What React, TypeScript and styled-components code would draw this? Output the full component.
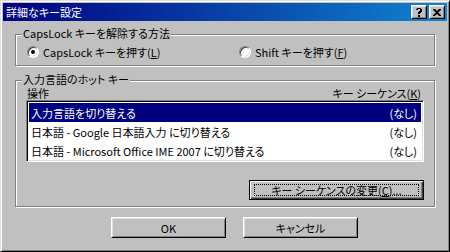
import React from "react";
import styled, { createGlobalStyle, css } from "styled-components";

const Global = createGlobalStyle`
  html, body { margin: 0; padding: 0; background: #c0c0c0; }
  body {
    font-family: "Noto Sans CJK JP", "Liberation Sans", sans-serif;
    font-size: 11px;
    font-feature-settings: "palt";
    color: #000;
  }
  * { box-sizing: border-box; }
`;

const raised = css`
  border: 1px solid;
  border-color: #fff #000 #000 #fff;
  box-shadow: inset 1px 1px #dfdfdf, inset -1px -1px #808080;
`;

const Window = styled.div`
  width: 450px;
  height: 252px;
  background: #c0c0c0;
  border: 1px solid;
  border-color: #dfdfdf #000 #000 #dfdfdf;
  box-shadow: inset 1px 1px #fff, inset -1px -1px #808080;
  padding: 2px;
  display: flex;
  flex-direction: column;
`;

const TitleBar = styled.div`
  height: 18px;
  flex: none;
  display: flex;
  align-items: center;
  padding: 0 2px 0 3px;
  background: linear-gradient(to right, #000080, #1084d0);
  color: #fff;
  font-size: 11px;
`;

const TitleText = styled.span`
  line-height: 18px;
`;

const CaptionButtons = styled.div`
  margin-left: auto;
  display: flex;
  gap: 2px;
`;

const CaptionButton = styled.div`
  width: 16px;
  height: 14px;
  background: #c0c0c0;
  ${raised};
  display: flex;
  align-items: center;
  justify-content: center;
`;

const Body = styled.div`
  flex: 1;
  display: flex;
  flex-direction: column;
  padding: 0 12px;
`;

const Group = styled.div<{ $top: number }>`
  position: relative;
  margin-top: ${(p) => p.$top}px;
  border: 1px solid #808080;
  box-shadow: inset 1px 1px #fff, 1px 1px #fff;
`;

const Legend = styled.span`
  position: absolute;
  top: -8px;
  left: 6px;
  padding: 0 1px;
  line-height: 12px;
  background: #c0c0c0;
  white-space: nowrap;
`;

const RadioRow = styled.div`
  display: flex;
  align-items: center;
  height: 14px;
  margin: 10px 0 6px;
  padding-left: 11px;
`;

const RadioItem = styled.label<{ $width?: number }>`
  display: flex;
  align-items: center;
  gap: 4px;
  width: ${(p) => (p.$width ? `${p.$width}px` : "auto")};
  white-space: nowrap;
`;

const RadioCircle = styled.span<{ $checked?: boolean }>`
  width: 12px;
  height: 12px;
  flex: none;
  position: relative;
  border-radius: 50%;
  background: #fff;
  border: 1px solid;
  border-color: #808080 #fff #fff #808080;
  box-shadow: inset 1px 1px #404040, inset -1px -1px #dfdfdf;
  &::after {
    content: "";
    display: ${(p) => (p.$checked ? "block" : "none")};
    position: absolute;
    left: 3px;
    top: 3px;
    width: 4px;
    height: 4px;
    border-radius: 50%;
    background: #000;
  }
`;

const U = styled.span`
  text-decoration: underline;
  text-underline-offset: 1px;
`;

const GroupInner = styled.div`
  display: flex;
  flex-direction: column;
  padding: 6px 10px 6px 10px;
`;

const HeaderRow = styled.div`
  display: flex;
  justify-content: space-between;
  height: 13px;
  line-height: 12px;
  padding: 0 3px 0 1px;
`;

const ListBox = styled.div`
  background: #fff;
  border: 1px solid;
  border-color: #808080 #fff #fff #808080;
  box-shadow: inset 1px 1px #000, inset -1px -1px #dfdfdf;
  padding: 2px 2px 1px 2px;
  display: flex;
  flex-direction: column;
`;

const ListRow = styled.div<{ $selected?: boolean }>`
  height: 19px;
  display: flex;
  align-items: center;
  justify-content: space-between;
  padding: 0 4px 0 2px;
  white-space: nowrap;
  background: ${(p) => (p.$selected ? "#000080" : "transparent")};
  color: ${(p) => (p.$selected ? "#fff" : "#000")};
`;

const ActionRow = styled.div`
  display: flex;
  justify-content: flex-end;
  margin-top: 18px;
`;

const PushButton = styled.button<{ $width: number; $default?: boolean; $height?: number }>`
  width: ${(p) => p.$width}px;
  height: ${(p) => p.$height ?? 21}px;
  font: inherit;
  color: #000;
  background: #c0c0c0;
  padding: 0;
  position: relative;
  ${(p) =>
    p.$default
      ? css`
          border: 1px solid #000;
          box-shadow: inset 1px 1px #fff, inset -1px -1px #404040,
            inset -2px -2px #808080;
        `
      : raised};
  display: flex;
  align-items: center;
  justify-content: center;
`;

const FocusRing = styled.span`
  position: absolute;
  inset: 3px 4px;
  border: 1px dotted #000;
`;

const Footer = styled.div`
  display: flex;
  gap: 17px;
  margin-top: 10px;
  padding-left: 96px;
`;

const Glyph = styled.svg`
  display: block;
`;

export default function App() {
  return (
    <>
      <Global />
      <Window>
        <TitleBar>
          <TitleText>詳細なキー設定</TitleText>
          <CaptionButtons>
            <CaptionButton>
              <Glyph width="8" height="9" viewBox="0 0 8 9">
                <path
                  d="M1 1h1V0h4v1h1v3H6v1H5v1H3V4h1V3h1V1H3v1H1z M3 7h2v2H3z"
                  fill="#000"
                />
              </Glyph>
            </CaptionButton>
            <CaptionButton>
              <Glyph width="8" height="7" viewBox="0 0 8 7">
                <path
                  d="M0 0h2l2 2 2-2h2v1L5 3.5 8 6v1H6L4 5 2 7H0V6l3-2.5L0 1z"
                  fill="#000"
                />
              </Glyph>
            </CaptionButton>
          </CaptionButtons>
        </TitleBar>
        <Body>
          <Group $top={13}>
            <Legend>CapsLock キーを解除する方法</Legend>
            <RadioRow>
              <RadioItem $width={212}>
                <RadioCircle $checked />
                <span>
                  CapsLock キーを押す(<U>L</U>)
                </span>
              </RadioItem>
              <RadioItem>
                <RadioCircle />
                <span>
                  Shift キーを押す(<U>F</U>)
                </span>
              </RadioItem>
            </RadioRow>
          </Group>
          <Group $top={14}>
            <Legend>入力言語のホット キー</Legend>
            <GroupInner>
              <HeaderRow>
                <span>操作</span>
                <span>
                  キー シーケンス(<U>K</U>)
                </span>
              </HeaderRow>
              <ListBox>
                <ListRow $selected>
                  <span>入力言語を切り替える</span>
                  <span>(なし)</span>
                </ListRow>
                <ListRow>
                  <span>日本語 - Google 日本語入力 に切り替える</span>
                  <span>(なし)</span>
                </ListRow>
                <ListRow>
                  <span>日本語 - Microsoft Office IME 2007 に切り替える</span>
                  <span>(なし)</span>
                </ListRow>
              </ListBox>
              <ActionRow>
                <PushButton $width={175} $height={20} $default>
                  <FocusRing />
                  キー シーケンスの変更(<U>C</U>)...
                </PushButton>
              </ActionRow>
            </GroupInner>
          </Group>
          <Footer>
            <PushButton $width={115}>OK</PushButton>
            <PushButton $width={115}>キャンセル</PushButton>
          </Footer>
        </Body>
      </Window>
    </>
  );
}
